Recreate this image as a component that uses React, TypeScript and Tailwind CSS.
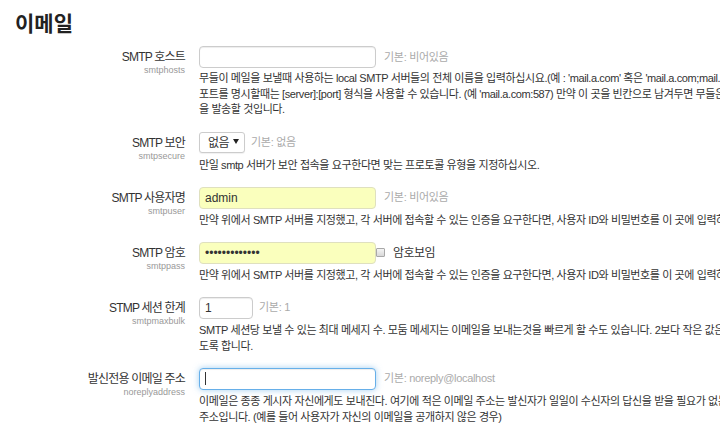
// 이메일 settings page (admin > server > email), static recreation
const font = 'font-["Liberation_Sans","Noto_Sans_CJK_KR",sans-serif]';

function Label({ title, name }: { title: string; name: string }) {
  return (
    <div className="pt-[4px] text-right">
      <div className="text-[12px] leading-[14px] tracking-[-0.8px] text-[#333]">{title}</div>
      <div className="text-[9px] leading-[12px] text-[#999]">{name}</div>
    </div>
  );
}

function Desc({ lines, cls = 'mt-[3px] leading-[16px]' }: { lines: string[]; cls?: string }) {
  return (
    <div className={`${cls} text-[11px] tracking-[-0.4px] text-[#333]`}>
      {lines.map((l, i) => (
        <div key={i} className="whitespace-nowrap">{l}</div>
      ))}
    </div>
  );
}

function Default({ children }: { children: React.ReactNode }) {
  return <span className="ml-[8px] text-[11px] tracking-[-0.3px] text-[#aaa]">{children}</span>;
}

function Row({ title, name, control, lines, descCls }: { title: string; name: string; control: React.ReactNode; lines: string[]; descCls?: string }) {
  return (
    <div className="grid grid-cols-[185px_1fr] gap-x-[14px]">
      <Label title={title} name={name} />
      <div className="min-w-0">
        <div className="flex h-[22px] items-center">{control}</div>
        <Desc lines={lines} cls={descCls} />
      </div>
    </div>
  );
}

const box = 'flex h-[22px] items-center rounded-[4px] border px-[5px] text-[12px] text-[#333]';
const inset = 'shadow-[inset_0_1px_1px_rgba(0,0,0,0.075)]';

export default function App() {
  const authHelp = '만약 위에서 SMTP 서버를 지정했고, 각 서버에 접속할 수 있는 인증을 요구한다면, 사용자 ID와 비밀번호를 이 곳에 입력하십시오.';

  return (
    <div className={`h-[427px] w-[720px] overflow-hidden bg-white ${font}`}>
      <h2 className="pl-[15px] pt-[10px] text-[21px] font-bold leading-[28px] text-[#222]">이메일</h2>

      <div className="mt-[8px] flex flex-col gap-[14px]">
        <Row
          title="SMTP 호스트"
          name="smtphosts"
          descCls="mt-[3px] leading-[15.5px]"
          control={
            <>
              <div className={`${box} ${inset} w-[177px] border-[#ccc] bg-white`} />
              <Default>기본: 비어있음</Default>
            </>
          }
          lines={[
            "무들이 메일을 보낼때 사용하는 local SMTP 서버들의 전체 이름을 입력하십시요.(예 : 'mail.a.com' 혹은 'mail.a.com;mail.b.com'). 기본값(25)이 아닌 다른 SMTP",
            "포트를 명시할때는 [server]:[port] 형식을 사용할 수 있습니다. (예 'mail.a.com:587) 만약 이 곳을 빈칸으로 남겨두면 무들은 PHP의 기본 메일 발송 방법을 이용하여 메일",
            '을 발송할 것입니다.',
          ]}
        />

        <Row
          title="SMTP 보안"
          name="smtpsecure"
          control={
            <>
              <div className="flex h-[21px] w-[46px] items-center justify-between rounded-[3px] border border-[#ccc] bg-white pl-[8px] pr-[5px] text-[12px] tracking-[-0.5px] text-[#333] shadow-[0_1px_1px_rgba(0,0,0,0.06)]">
                <span>없음</span>
                <svg width="6" height="5" viewBox="0 0 6 5" className="mb-[2px]">
                  <path d="M0 0h6L3 5z" fill="#222" />
                </svg>
              </div>
              <span className="ml-[6px] text-[11px] tracking-[-0.3px] text-[#aaa]">기본: 없음</span>
            </>
          }
          lines={['만일 smtp 서버가 보안 접속을 요구한다면 맞는 프로토콜 유형을 지정하십시오.']}
        />

        <Row
          title="SMTP 사용자명"
          name="smtpuser"
          control={
            <>
              <div className={`${box} w-[177px] border-[#dfe0bf] bg-[#faffbd] text-[#222]`}>admin</div>
              <Default>기본: 비어있음</Default>
            </>
          }
          lines={[authHelp]}
        />

        <Row
          title="SMTP 암호"
          name="smtppass"
          control={
            <>
              <div className={`${box} w-[177px] border-[#dfe0bf] bg-[#faffbd] text-[9px] text-[#222]`}>•••••••••••••</div>
              <span className="h-[9px] w-[9px] rounded-[1px] border border-[#a8a8a8] bg-gradient-to-b from-[#f4f4f4] to-[#d8d8d8]" />
              <span className="ml-[8px] text-[12px] tracking-[-0.5px] text-[#333]">암호보임</span>
            </>
          }
          lines={[authHelp]}
        />

        <Row
          title="STMP 세션 한계"
          name="smtpmaxbulk"
          control={
            <>
              <div className={`${box} ${inset} h-[21px] w-[54px] border-[#ccc] bg-white`}>1</div>
              <span className="ml-[6px] text-[11px] tracking-[-0.3px] text-[#aaa]">기본: 1</span>
            </>
          }
          lines={[
            'SMTP 세션당 보낼 수 있는 최대 메세지 수. 모둠 메세지는 이메일을 보내는것을 빠르게 할 수도 있습니다. 2보다 작은 값은 각 이메일마다 새로운 SMTP 세션을 생성하',
            '도록 합니다.',
          ]}
        />

        <Row
          title="발신전용 이메일 주소"
          name="noreplyaddress"
          control={
            <>
              <div className={`${box} w-[177px] border-[#66afe9] bg-white shadow-[inset_0_1px_1px_rgba(0,0,0,0.075),0_0_6px_rgba(102,175,233,0.6)]`}>
                <span className="h-[13px] w-[1px] bg-[#333]" />
              </div>
              <Default>기본: noreply@localhost</Default>
            </>
          }
          lines={[
            '이메일은 종종 게시자 자신에게도 보내진다. 여기에 적은 이메일 주소는 발신자가 일일이 수신자의 답신을 받을 필요가 없는 경우 "발신 전용" 주소로 사용되는',
            '주소입니다. (예를 들어 사용자가 자신의 이메일을 공개하지 않은 경우)',
          ]}
        />
      </div>
    </div>
  );
}
